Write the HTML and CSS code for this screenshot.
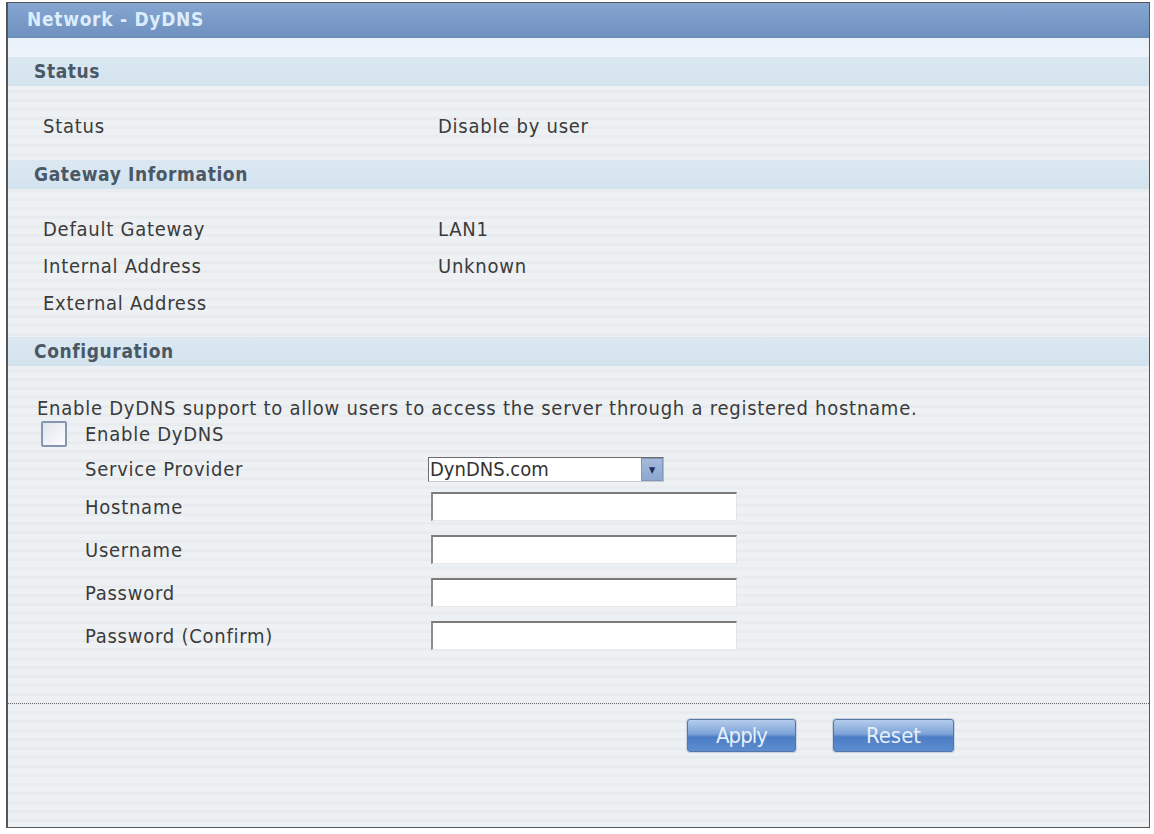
FILE: index.html
```html
<!DOCTYPE html>
<html lang="en">
<head>
  <meta charset="UTF-8">
  <title>Network - DyDNS</title>
  <link rel="stylesheet" href="styles.css">
</head>
<body>
  <div class="panel">
    <div class="title-bar">Network - DyDNS</div>
    <div class="title-strip"></div>

    <div class="section-head">Status</div>
    <div class="info-rows">
      <div class="info-row"><span class="label">Status</span><span class="value">Disable by user</span></div>
    </div>

    <div class="section-head">Gateway Information</div>
    <div class="info-rows">
      <div class="info-row"><span class="label">Default Gateway</span><span class="value">LAN1</span></div>
      <div class="info-row"><span class="label">Internal Address</span><span class="value">Unknown</span></div>
      <div class="info-row"><span class="label">External Address</span><span class="value"></span></div>
    </div>

    <div class="section-head">Configuration</div>
    <div class="config">
      <p class="intro">Enable DyDNS support to allow users to access the server through a registered hostname.</p>
      <label class="check-row">
        <span class="checkbox"></span>
        <span>Enable DyDNS</span>
      </label>
      <div class="form-row provider-row">
        <span class="form-label">Service Provider</span>
        <div class="select">
          <span class="select-text">DynDNS.com</span>
          <span class="select-btn">&#9660;</span>
        </div>
      </div>
      <div class="form-row first-input">
        <span class="form-label">Hostname</span>
        <input class="text-input" type="text">
      </div>
      <div class="form-row">
        <span class="form-label">Username</span>
        <input class="text-input" type="text">
      </div>
      <div class="form-row">
        <span class="form-label">Password</span>
        <input class="text-input" type="password">
      </div>
      <div class="form-row">
        <span class="form-label">Password (Confirm)</span>
        <input class="text-input" type="password">
      </div>
    </div>

    <div class="actions">
      <button class="button apply">Apply</button>
      <button class="button reset">Reset</button>
    </div>
  </div>
</body>
</html>
```

FILE: styles.css
```css
body {
  margin: 0;
  padding: 2px 0 0 6px;
  background-color: #fff;
  font-family: "DejaVu Sans Condensed", "DejaVu Sans", sans-serif;
  font-stretch: condensed;
  font-size: 20px;
  letter-spacing: 0.75px;
  color: #3b3b3b;
}

.panel {
  width: 1141px;
  height: 824px;
  border: 1px solid #555;
  border-left: 2px solid #555;
  background-color: #edf0f2;
  background-image: repeating-linear-gradient(#eef1f3 0 6px, #e9ecef 6px 9px);
  display: flex;
  flex-direction: column;
}

.title-bar {
  height: 35px;
  line-height: 33px;
  padding-left: 19px;
  background: linear-gradient(#86a6d2, #7898c6 60%, #7092c0);
  border-bottom: 1px solid #6b8cb6;
  color: #dbedfb;
  font-weight: bold;
  font-size: 19px;
  letter-spacing: 0.7px;
  box-sizing: border-box;
}

.title-strip {
  height: 19px;
  background: linear-gradient(#e8f1fa, #edf3f9);
}

.section-head {
  height: 29px;
  line-height: 29px;
  padding-left: 26px;
  background: linear-gradient(#dbe8f2, #d3e3ee);
  color: #4a5866;
  font-weight: bold;
  font-size: 19px;
  letter-spacing: 0.6px;
}

.info-rows {
  padding: 22px 0 15px;
}

.info-row {
  display: flex;
  height: 37px;
  line-height: 37px;
}

.info-row .label {
  width: 395px;
  padding-left: 35px;
}

.config {
  padding: 30px 0 53px 29px;
  border-bottom: 1px dotted #6a6a6a;
}

.intro {
  margin: 0;
  line-height: 24px;
  white-space: nowrap;
}

.check-row {
  display: flex;
  align-items: center;
  height: 28px;
  gap: 18px;
  padding-left: 4px;
}

.checkbox {
  width: 22px;
  height: 22px;
  border: 2px solid #8496b0;
  border-radius: 2px;
  background: linear-gradient(135deg, #dfe5ee, #fdfdfe);
}

.form-row {
  display: flex;
  align-items: center;
  height: 29px;
  margin-top: 14px;
  padding-left: 48px;
}

.provider-row {
  height: 26px;
  margin-top: 8px;
}

.form-row.first-input {
  margin-top: 10px;
}

.form-label {
  width: 343px;
}

.select {
  display: flex;
  width: 236px;
  height: 25px;
  box-sizing: border-box;
  border-top: 1px solid #6c6c6c;
  border-left: 1px solid #6c6c6c;
  border-right: 1px solid #b8bcc2;
  border-bottom: 1px solid #c8ccd0;
  background-color: #fff;
  letter-spacing: 0;
}

.select-text {
  flex: 1;
  line-height: 23px;
  padding-left: 1px;
  color: #333;
}

.select-btn {
  width: 22px;
  background: linear-gradient(#a3badb, #8ea7cf);
  border: 1px solid #8097bb;
  color: #1f2f5a;
  font-size: 9px;
  text-align: center;
  line-height: 22px;
  box-sizing: border-box;
}

.text-input {
  width: 306px;
  height: 29px;
  box-sizing: border-box;
  margin: 0 0 0 3px;
  padding: 0;
  border-top: 2px solid #7b7b7b;
  border-left: 2px solid #8c8c8c;
  border-right: 1px solid #e2e4e6;
  border-bottom: 1px solid #e6e8ea;
  background-color: #fff;
}

.actions {
  display: flex;
  gap: 37px;
  padding: 15px 0 0 679px;
}

.button {
  height: 33px;
  padding: 0;
  border: 1px solid #5577a8;
  border-radius: 3px;
  background: linear-gradient(#b4cdec, #7ea3d8 45%, #4c7cc4 55%, #5d8dd0);
  box-shadow: 0 0 0 1px #c9d3de;
  color: #e6f0fb;
  font-family: "DejaVu Sans Condensed", "DejaVu Sans", sans-serif;
  font-stretch: condensed;
  font-size: 22px;
  cursor: pointer;
}

.apply {
  width: 109px;
  letter-spacing: -1px;
}

.reset {
  width: 121px;
}
```
